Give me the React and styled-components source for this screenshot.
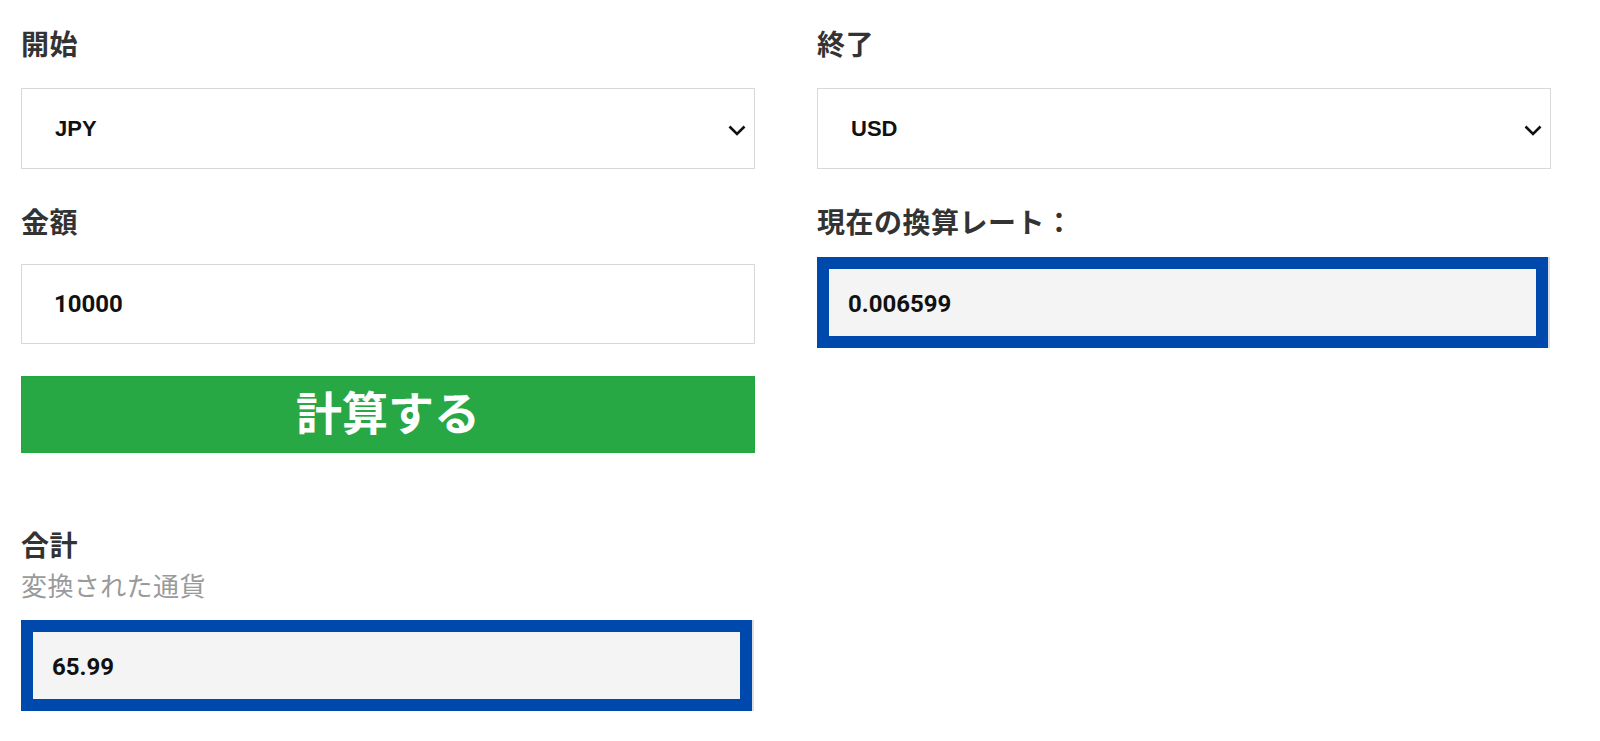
import React from 'react';
import styled, { createGlobalStyle } from 'styled-components';

const GlobalStyle = createGlobalStyle`
  html, body {
    margin: 0;
    padding: 0;
    background: #ffffff;
  }
  body {
    font-family: "Noto Sans CJK JP", "Noto Sans", sans-serif;
  }
`;

const Page = styled.div`
  display: grid;
  grid-template-columns: 734px 734px;
  column-gap: 62px;
  padding: 0 49px 0 21px;
`;

const Column = styled.div`
  display: flex;
  flex-direction: column;
`;

const Label = styled.div`
  font-family: "Noto Sans CJK JP", sans-serif;
  font-size: 28px;
  line-height: 36px;
  letter-spacing: 0.5px;
  font-weight: 700;
  color: #333333;
  margin-top: ${(p) => p.$top || 0}px;
`;

const SubLabel = styled.div`
  font-family: "Noto Sans CJK JP", sans-serif;
  font-size: 26px;
  line-height: 34px;
  letter-spacing: 0.4px;
  font-weight: 400;
  color: #9a9a9a;
  margin-top: 6px;
`;

const SelectWrap = styled.div`
  position: relative;
  margin-top: ${(p) => p.$top || 0}px;
`;

const Select = styled.select`
  appearance: none;
  -webkit-appearance: none;
  display: block;
  width: 100%;
  height: 81px;
  box-sizing: border-box;
  border: 1px solid #d8d8d8;
  border-radius: 0;
  background: #ffffff;
  padding: 0 0 0 33px;
  font-family: "Liberation Sans", Arial, sans-serif;
  font-size: 22px;
  font-weight: 700;
  color: #111111;
  outline: none;
`;

const Chevron = styled.svg`
  position: absolute;
  right: 9px;
  top: 37px;
  pointer-events: none;
`;

const Input = styled.input`
  display: block;
  width: 100%;
  height: 80px;
  box-sizing: border-box;
  margin-top: ${(p) => p.$top || 0}px;
  border: 1px solid #d8d8d8;
  border-radius: 0;
  background: #ffffff;
  padding: 0 0 0 32px;
  font-family: Roboto, "Noto Sans", sans-serif;
  font-size: 24px;
  font-weight: 700;
  color: #111111;
  outline: none;
`;

const Button = styled.button`
  display: block;
  width: 100%;
  height: 77px;
  margin-top: 32px;
  border: 1px solid #1fa83c;
  border-radius: 0;
  background: #28a745;
  color: #ffffff;
  font-family: "Noto Sans CJK JP", sans-serif;
  font-size: 46px;
  font-weight: 700;
  line-height: 1;
  padding: 0 0 10px;
  cursor: pointer;
`;

const ResultBox = styled.div`
  width: calc(100% - 3px);
  height: 91px;
  box-sizing: border-box;
  margin-top: ${(p) => p.$top || 0}px;
  border: 12px solid #0049ac;
  background: #f4f4f4;
  box-shadow: 2px 0 0 #dedede;
  display: flex;
  align-items: center;
  padding: 3px 0 0 19px;
  font-family: Roboto, "Noto Sans", sans-serif;
  font-size: 24px;
  font-weight: 700;
  color: #111111;
`;

const ChevronIcon = () => (
  <Chevron width="18" height="11" viewBox="0 0 18 11">
    <path d="M1.5 1.5 L9 9 L16.5 1.5" fill="none" stroke="#111" strokeWidth="2.6" />
  </Chevron>
);

const CurrencySelect = ({ value, top }) => (
  <SelectWrap $top={top}>
    <Select defaultValue={value}>
      <option value="JPY">JPY</option>
      <option value="USD">USD</option>
      <option value="EUR">EUR</option>
    </Select>
    <ChevronIcon />
  </SelectWrap>
);

export default function App() {
  return (
    <>
      <GlobalStyle />
      <Page>
        <Column>
          <Label $top={25}>開始</Label>
          <CurrencySelect value="JPY" top={27} />
          <Label $top={34}>金額</Label>
          <Input $top={25} defaultValue="10000" />
          <Button>計算する</Button>
          <Label $top={73}>合計</Label>
          <SubLabel>変換された通貨</SubLabel>
          <ResultBox $top={18}>65.99</ResultBox>
        </Column>
        <Column>
          <Label $top={25}>終了</Label>
          <CurrencySelect value="USD" top={27} />
          <Label $top={34}>現在の換算レート：</Label>
          <ResultBox $top={18}>0.006599</ResultBox>
        </Column>
      </Page>
    </>
  );
}
